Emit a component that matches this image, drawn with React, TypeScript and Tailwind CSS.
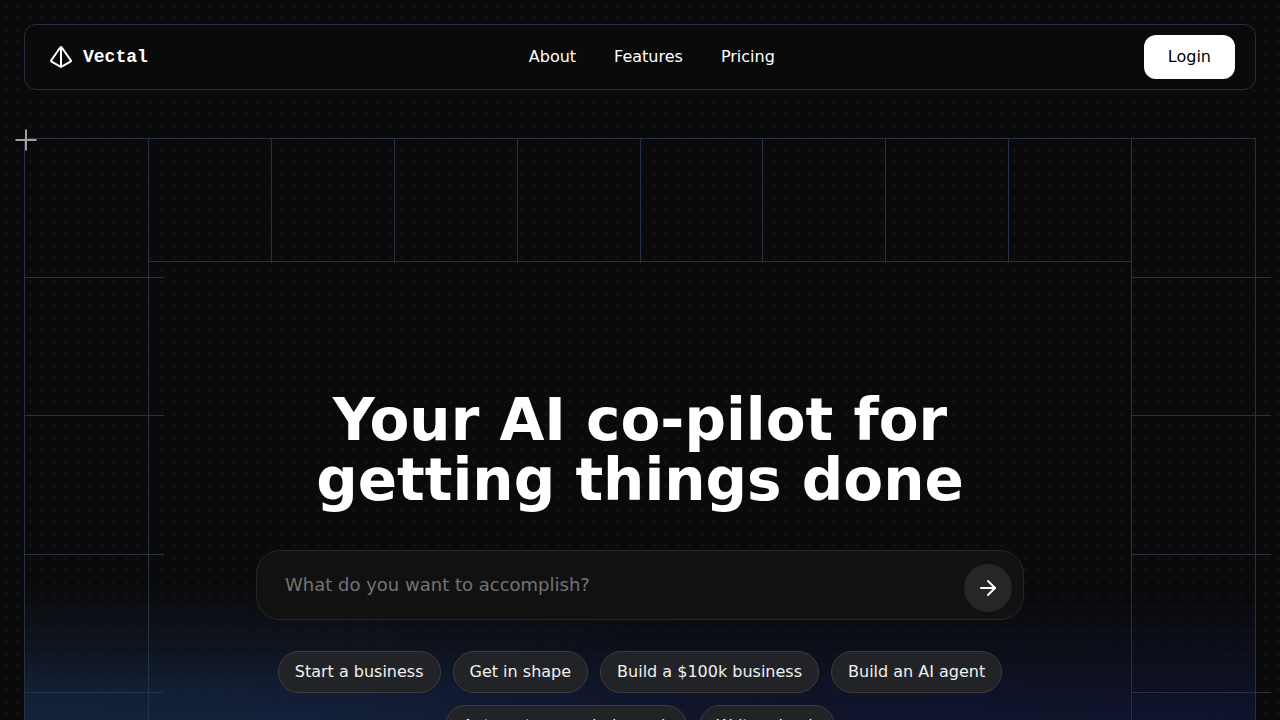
import { ArrowRight } from "lucide-react";

const links = ["About", "Features", "Pricing"];

const suggestions = [
  "Start a business",
  "Get in shape",
  "Build a $100k business",
  "Build an AI agent",
  "Automate my admin work",
  "Write a book",
];

function Logo() {
  return (
    <a href="#" className="flex items-center gap-2.5 pl-1 font-['Liberation_Mono',monospace] text-lg font-bold">
      <svg viewBox="0 0 24 24" className="size-6" fill="none" stroke="currentColor" strokeWidth="2" strokeLinejoin="round" aria-hidden="true">
        <path d="M11.4 2.3 2.2 15.4a.8.8 0 0 0 .3 1.2l8.9 5.1a1.3 1.3 0 0 0 1.2 0l8.9-5.1a.8.8 0 0 0 .3-1.2L12.6 2.3a.8.8 0 0 0-1.2 0ZM12 2v20" />
      </svg>
      Vectal
    </a>
  );
}

function Header() {
  return (
    <header className="relative flex items-center justify-between rounded-xl border border-[#232f3f] bg-[#0a0a0a] px-5 py-2.5">
      <Logo />
      <nav className="flex gap-[38px] pl-3">
        {links.map((link) => (
          <a key={link} href={`#${link.toLowerCase()}`}>
            {link}
          </a>
        ))}
      </nav>
      <button type="button" className="h-11 rounded-xl bg-white px-6 text-black">
        Login
      </button>
    </header>
  );
}

function SideRows() {
  return (
    <div className="-mr-4 grid h-[693px] grid-rows-5">
      {[0, 1, 2, 3, 4].map((row) => (
        <div key={row} className="border-t border-[#253244] first:border-transparent" />
      ))}
    </div>
  );
}

function GridLines() {
  return (
    <div className="absolute inset-0 grid grid-cols-10 border-x border-[#253244]" aria-hidden="true">
      <SideRows />
      <div className="col-span-8 border-x border-[#253244]">
        <div className="-ml-px grid h-[124px] grid-cols-8 border-b border-[#253244]">
          {[0, 1, 2, 3, 4, 5, 6, 7].map((column) => (
            <div key={column} className="-mb-0.5 border-l border-[#253244] first:border-transparent" />
          ))}
        </div>
      </div>
      <SideRows />
      <div className="absolute inset-x-0 top-0 border-t border-[#253244]" />
    </div>
  );
}

function Glow() {
  return (
    <div
      className="absolute inset-x-0 top-[444px] bottom-0 bg-[linear-gradient(to_right,#15263f,#15233f_25%,#101731_55%,#10142f)] [mask-image:linear-gradient(to_bottom,transparent,rgba(0,0,0,0.35)_60px,rgba(0,0,0,0.75)_105px,black_150px)]"
      aria-hidden="true"
    />
  );
}

function Dots() {
  return (
    <div
      className="absolute inset-0 bg-[radial-gradient(circle,rgba(255,255,255,0.02)_2px,transparent_2px)] bg-[size:12px_12px]"
      aria-hidden="true"
    />
  );
}

export default function App() {
  return (
    <div className="relative isolate min-h-screen overflow-hidden bg-[#0a0a0a] p-6 font-['DejaVu_Sans',sans-serif] text-base text-white">
      <Dots />
      <Header />
      <main className="relative mt-12 px-6 pt-[252px] pb-20">
        <Glow />
        <GridLines />
        <svg className="absolute -top-[9px] -left-[9px] size-[22px] text-[#a0a0a0]" viewBox="0 0 22 22" stroke="currentColor" strokeWidth="2" aria-hidden="true">
          <path d="M11 0.5v21M0.5 11h21" />
        </svg>
        <div className="relative mx-auto flex max-w-3xl flex-col items-center">
          <h1 className="max-w-2xl text-center text-[58px] leading-[60px] font-bold">
            Your AI co-pilot for getting things done
          </h1>
          <form
            className="mt-10 flex w-full rounded-3xl border border-[#262626] bg-[#121212]/95 pt-[13px] pr-[11px] pb-[7px] pl-7"
            onSubmit={(event) => event.preventDefault()}
          >
            <input
              type="text"
              aria-label="What do you want to accomplish?"
              placeholder="What do you want to accomplish?"
              className="h-10 min-w-0 flex-1 bg-transparent text-lg outline-none placeholder:text-[#737373]"
            />
            <button type="submit" aria-label="Submit" className="flex size-12 items-center justify-center rounded-full bg-[#262626]">
              <ArrowRight className="size-6" />
            </button>
          </form>
          <div className="mt-[31px] flex flex-wrap justify-center gap-3">
            {suggestions.map((suggestion) => (
              <button key={suggestion} type="button" className="h-[42px] rounded-full border border-[#3c3c3c] bg-[#222326] px-4 text-[#f0f0f0]">
                {suggestion}
              </button>
            ))}
          </div>
        </div>
      </main>
    </div>
  );
}
